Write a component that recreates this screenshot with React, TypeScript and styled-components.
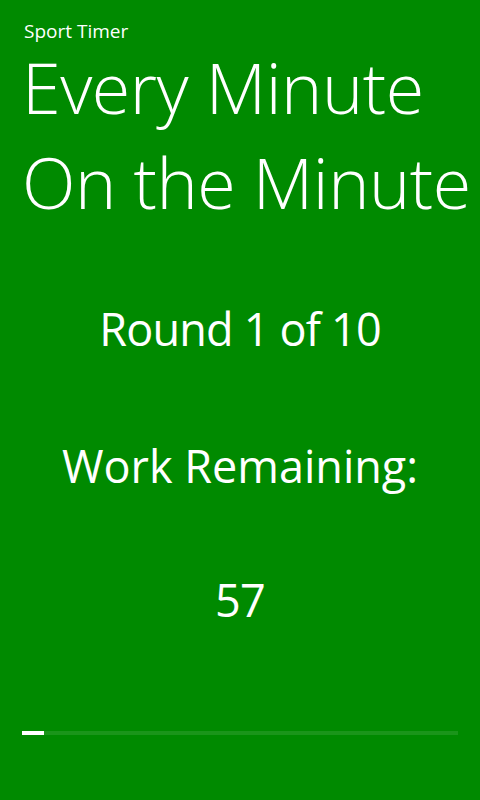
import React from "react";
import styled, { createGlobalStyle } from "styled-components";

const Global = createGlobalStyle`
  html, body { margin: 0; padding: 0; background: #008a00; }
  body { font-family: "Open Sans", "Noto Sans", sans-serif; color: #ffffff; }
  * { box-sizing: border-box; }
`;

const Page = styled.div`
  width: 480px;
  height: 800px;
  background: #008a00;
  display: flex;
  flex-direction: column;
  overflow: hidden;
`;

const Header = styled.header`
  padding: 22px 0 0 24px;
`;

const AppName = styled.div`
  font-size: 19px;
  font-weight: 400;
  line-height: 18px;
  letter-spacing: 0;
`;

const PageTitle = styled.h1`
  margin: 0 0 0 -2px;
  font-size: 70px;
  font-weight: 300;
  line-height: 95px;
  letter-spacing: -0.5px;
  white-space: nowrap;
`;

const Body = styled.main`
  flex: 1;
  display: flex;
  flex-direction: column;
  align-items: center;
`;

const Line = styled.div<{ $top: number; $spacing: number }>`
  margin-top: ${(p) => p.$top}px;
  font-size: 45px;
  font-weight: 400;
  line-height: 60px;
  letter-spacing: ${(p) => p.$spacing}px;
  text-align: center;
`;

const ProgressTrack = styled.div`
  margin: 0 22px 65px 22px;
  height: 4px;
  background: rgba(255, 255, 255, 0.1);
  display: flex;
`;

const ProgressFill = styled.div`
  height: 100%;
  background: #ffffff;
`;

export default function App() {
  const progress = 22 / 436;
  return (
    <>
      <Global />
      <Page>
        <Header>
          <AppName>Sport Timer</AppName>
          <PageTitle>
            Every Minute
            <br />
            On the Minute
          </PageTitle>
        </Header>
        <Body>
          <Line $top={69} $spacing={-0.8}>Round 1 of 10</Line>
          <Line $top={77} $spacing={0}>Work Remaining:</Line>
          <Line $top={74} $spacing={-0.8}>57</Line>
        </Body>
        <ProgressTrack>
          <ProgressFill style={{ width: `${progress * 100}%` }} />
        </ProgressTrack>
      </Page>
    </>
  );
}
